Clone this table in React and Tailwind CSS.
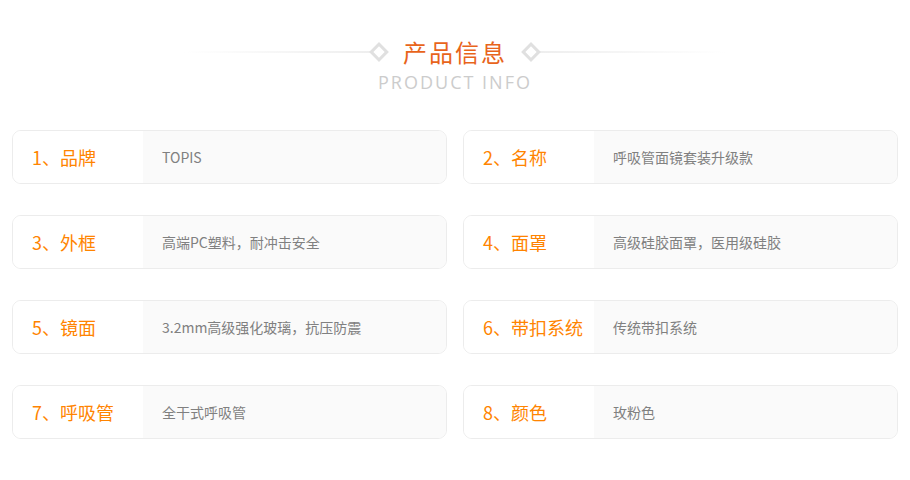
const items = [
  { label: "1、品牌", value: "TOPIS" },
  { label: "2、名称", value: "呼吸管面镜套装升级款" },
  { label: "3、外框", value: "高端PC塑料，耐冲击安全" },
  { label: "4、面罩", value: "高级硅胶面罩，医用级硅胶" },
  { label: "5、镜面", value: "3.2mm高级强化玻璃，抗压防震" },
  { label: "6、带扣系统", value: "传统带扣系统" },
  { label: "7、呼吸管", value: "全干式呼吸管" },
  { label: "8、颜色", value: "玫粉色" },
];

const Diamond = () => (
  <div className="w-[14px] h-[14px] border-[3px] border-[#e0e0e0] rotate-45 shrink-0" />
);

const App = () => {
  return (
    <div
      className="w-[910px] h-[480px] bg-white overflow-hidden"
      style={{ fontFamily: '"Microsoft YaHei", "Noto Sans CJK SC", "Noto Sans", sans-serif' }}
    >
      {/* header */}
      <div className="pt-[37px] flex flex-col items-center">
        <div className="flex items-center h-[30px]">
          <div className="w-[188px] h-[2px] bg-gradient-to-r from-transparent to-[#eeeeee]" />
          <Diamond />
          <h1 className="mx-[17px] text-[24px] leading-[30px] text-[#e8641b] tracking-[2px]">产品信息</h1>
          <Diamond />
          <div className="w-[188px] h-[2px] bg-gradient-to-l from-transparent to-[#eeeeee]" />
        </div>
        <p
          className="mt-[4px] text-[18px] leading-[22px] text-[#cccccc] tracking-[2px]"
          style={{ fontFamily: '"Open Sans", "Noto Sans", sans-serif' }}
        >
          PRODUCT INFO
        </p>
      </div>

      {/* list */}
      <div className="mt-[37px] px-3 grid grid-cols-2 gap-x-4 gap-y-[31px]">
        {items.map((item) => (
          <div
            key={item.label}
            className="flex h-[54px] border border-[#ececec] rounded-[9px] overflow-hidden"
          >
            <div className="w-[130px] shrink-0 bg-white flex items-center pl-[19px] text-[18px] text-[#ff8400]">
              {item.label}
            </div>
            <div className="flex-1 bg-[#fafafa] flex items-center pl-[19px] text-[14px] text-[#808080]">
              {item.value}
            </div>
          </div>
        ))}
      </div>
    </div>
  );
};

export default App;
